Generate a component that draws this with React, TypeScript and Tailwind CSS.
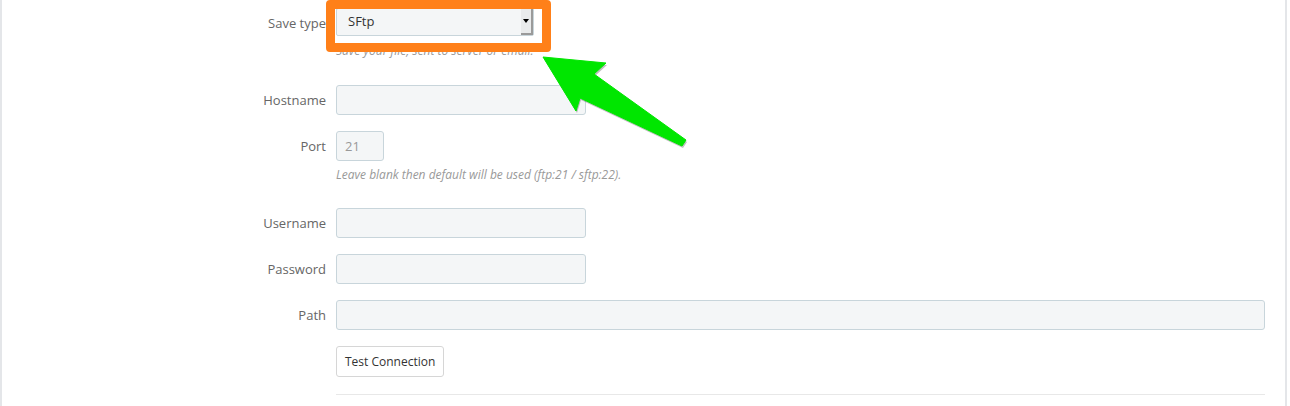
import type { ReactNode } from 'react';

const font = { fontFamily: '"Open Sans", "Liberation Sans", sans-serif' };

function Row({
  label,
  children,
  className = '',
}: {
  label?: string;
  children: ReactNode;
  className?: string;
}) {
  return (
    <div className={`flex items-start ${className}`}>
      <label className="w-[334px] shrink-0 pr-[10px] text-right text-[13px] leading-[30px] text-[#666]">
        {label}
      </label>
      <div className="flex-1">{children}</div>
    </div>
  );
}

const inputCls =
  'block h-[30px] rounded-[3px] border border-[#c8d5db] bg-[#f4f6f7] px-2 text-[13px] text-[#999] outline-none';

export default function App() {
  return (
    <div style={font} className="relative h-[406px] w-[1290px] overflow-hidden bg-white">
      <div className="h-full w-[1287px] border-l-2 border-r-2 border-[#e4e6e9] pr-[20px] pt-[8px]">
        {/* Save type */}
        <Row label="Save type" className="mb-[25px]">
          <div className="relative flex h-[28px] w-[198px] items-center rounded-[2px] border border-[#c8d5db] bg-[#f4f6f7] text-[13px] text-[#333]">
            <span className="pl-[11px]">SFtp</span>
            <div className="absolute right-0 top-0 flex h-full w-[12px] items-center justify-center border-r-2 border-b-2 border-[#9a9a9a] bg-[#e9ebec]">
              <div className="h-0 w-0 border-x-[3px] border-t-[4px] border-x-transparent border-t-black" />
            </div>
          </div>
          <p className="mt-[6px] text-[12px] italic text-[#999]">
            Save your file, sent to server or email.
          </p>
        </Row>

        <Row label="Hostname" className="mb-[16px]">
          <input className={`${inputCls} w-[250px]`} />
        </Row>

        <Row label="Port" className="mb-[24px]">
          <input className={`${inputCls} w-[48px]`} defaultValue="21" />
          <p className="mt-[5px] text-[12px] italic text-[#999]">
            Leave blank then default will be used (ftp:21 / sftp:22).
          </p>
        </Row>

        <Row label="Username" className="mb-[16px]">
          <input className={`${inputCls} w-[250px]`} />
        </Row>

        <Row label="Password" className="mb-[16px]">
          <input className={`${inputCls} w-[250px]`} type="password" />
        </Row>

        <Row label="Path" className="mb-[16px]">
          <input className={`${inputCls} w-full`} />
        </Row>

        <Row>
          <button className="h-[31px] rounded-[3px] border border-[#d6d6d6] bg-white px-[8px] text-[12px] text-[#333]">
            Test Connection
          </button>
          <div className="mt-[17px] h-px w-full bg-[#e8e8e8]" />
        </Row>
      </div>

      {/* annotation box */}
      <div className="pointer-events-none absolute left-[326px] top-0 h-[52px] w-[225px] rounded-[4px] border-[9px] border-[#ff8019]" />

      {/* annotation arrow */}
      <svg
        className="pointer-events-none absolute left-0 top-0"
        width="1290"
        height="406"
        viewBox="0 0 1290 406"
      >
        <polygon
          points="543,57 606,63 594,74 686,140 682,146 580,98 576,111"
          fill="#000"
          opacity="0.25"
          transform="translate(1,2)"
        />
        <polygon
          points="543,57 606,63 594,74 686,140 682,146 580,98 576,111"
          fill="#00e600"
          stroke="#00e600"
          strokeLinejoin="round"
          strokeWidth="1"
        />
      </svg>
    </div>
  );
}
